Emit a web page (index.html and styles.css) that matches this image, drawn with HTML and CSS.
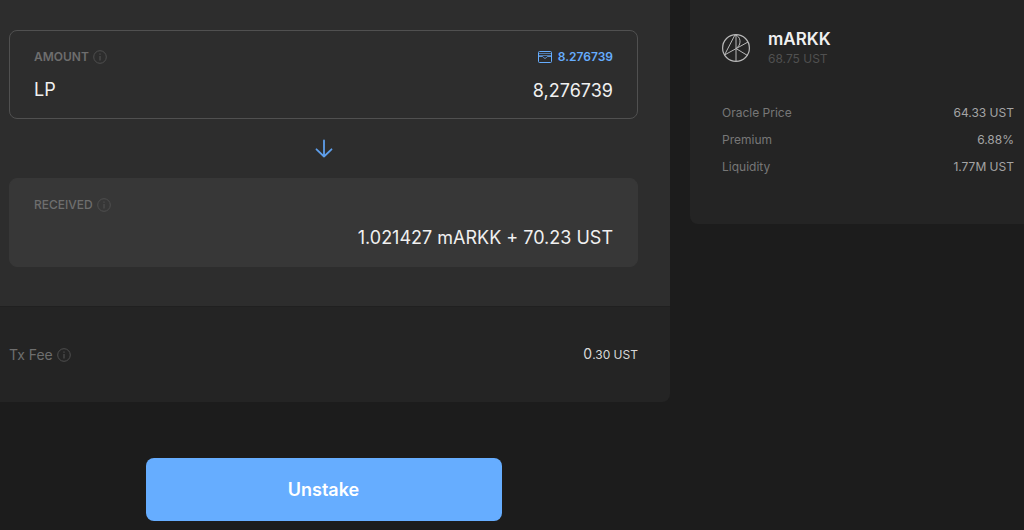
FILE: index.html
```html
<!DOCTYPE html>
<html lang="en">
<head>
    <meta charset="UTF-8">
    <meta name="viewport" content="width=device-width, initial-scale=1.0">
    <title>Unstake LP</title>
    <link rel="stylesheet" href="styles.css">
</head>
<body>
    <svg class="defs" aria-hidden="true">
        <symbol id="icon-info" viewBox="0 0 14 14">
            <circle cx="7" cy="7" r="6.3" fill="none" stroke="currentColor"/>
            <path d="M7 6v4.4M7 3.6v1.2" fill="none" stroke="currentColor" stroke-width="1.2"/>
        </symbol>
    </svg>

    <main class="layout">
        <form class="exchange">
            <section class="panel">
                <div class="field">
                    <div class="field-header">
                        <label for="amount">AMOUNT <svg class="icon-info"><use href="#icon-info"/></svg></label>
                        <button type="button" class="max">
                            <svg class="icon-wallet" viewBox="0 0 14 12" fill="none" stroke="currentColor">
                                <rect x="0.5" y="0.5" width="13" height="11" rx="1"/>
                                <path d="M0.5 2.500h13" stroke-opacity="0.6"/>
                                <path d="M0.5 4.500h13" stroke-opacity="0.6"/>
                                <path d="M0.5 5.500H4.500C5.300 5.500 5.300 7.300 7 7.300S8.700 5.500 9.500 5.500H13.500" stroke-opacity="0.8"/>
                            </svg>
                            8.276739
                        </button>
                    </div>
                    <div class="field-body">
                        <span>LP</span>
                        <input type="text" id="amount" name="amount" value="8,276739" inputmode="decimal" autocomplete="off">
                    </div>
                </div>

                <svg class="icon-arrow" viewBox="0 0 18 18" fill="none" stroke="currentColor" stroke-width="1.8" stroke-linecap="round" stroke-linejoin="round">
                    <path d="M9 1v16M1.500 9.800L9 17l7.500-7.200"/>
                </svg>

                <div class="field field-output">
                    <div class="field-header">
                        <label for="received">RECEIVED <svg class="icon-info"><use href="#icon-info"/></svg></label>
                    </div>
                    <div class="field-body">
                        <output id="received">1.021427 mARKK + 70.23 UST</output>
                    </div>
                </div>
            </section>

            <dl class="fee">
                <dt>Tx Fee <svg class="icon-info"><use href="#icon-info"/></svg></dt>
                <dd>0<small>.30 UST</small></dd>
            </dl>

            <div class="actions">
                <button type="submit" class="submit">Unstake</button>
            </div>
        </form>

        <aside class="asset">
            <header class="asset-header">
                <svg class="asset-logo" viewBox="0 0 28 28" fill="none" stroke="currentColor">
                    <circle cx="14" cy="14" r="13.400" stroke-width="1.200"/>
                    <path d="M2.500 21L13 0.800M14 1v26M2.500 21L26 8M14 14.500L25.500 21.500M13 0.800C19 2 20 11 14 14.500"/>
                </svg>
                <div>
                    <h1>mARKK</h1>
                    <p>68.75 UST</p>
                </div>
            </header>
            <dl class="stats">
                <div><dt>Oracle Price</dt><dd>64.33 UST</dd></div>
                <div><dt>Premium</dt><dd>6.88%</dd></div>
                <div><dt>Liquidity</dt><dd>1.77M UST</dd></div>
            </dl>
        </aside>
    </main>
</body>
</html>
```

FILE: styles.css
```css
:root {
    --bg: #1c1c1c;
    --card: #242424;
    --panel: #2d2d2d;
    --output: #373737;
    --border: #505050;
    --blue: #66adff;
    --text: #f0f0f0;
    --muted: #6e6e6e;
}

* {
    box-sizing: border-box;
}

body {
    font-family: Inter, "Liberation Sans", sans-serif;
    font-size: 12px;
    line-height: 20px;
    margin: 0;
    background: var(--bg);
    color: var(--text);
}

h1, p, dl, dd {
    margin: 0;
}

button, input {
    font-family: inherit;
    padding: 0;
    border: none;
    background: none;
}

button {
    cursor: pointer;
}

.defs {
    display: none;
}

.layout {
    display: grid;
    grid-template-columns: 1fr 334px;
    gap: 20px;
    align-items: start;
}

.panel {
    display: flex;
    flex-direction: column;
    padding: 30px 32px 39px 9px;
    background: var(--panel);
}

.field {
    padding: 16px 24px 14px;
    border: 1px solid var(--border);
    border-radius: 8px;
}

.field-output {
    background: var(--output);
    border-color: var(--output);
}

.field-header, .field-body {
    display: flex;
    justify-content: space-between;
    align-items: center;
}

.field-header {
    margin-bottom: 9px;
    color: var(--muted);
}

.field-header label {
    display: flex;
    align-items: center;
    gap: 4px;
    font-weight: 600;
}

.field-output label {
    font-weight: 500;
}

.field-body {
    font-size: 18px;
    line-height: 28px;
}

.field-body input {
    flex: 1;
    min-width: 0;
    height: 28px;
    color: inherit;
    font-size: 18px;
    text-align: right;
    outline: none;
}

.field-body output {
    margin-left: auto;
}

.icon-info {
    width: 14px;
    height: 14px;
    color: #4f4f4f;
}

.max {
    display: flex;
    align-items: center;
    gap: 6px;
    color: var(--blue);
    font-size: 12px;
    font-weight: 600;
    line-height: 20px;
}

.icon-wallet {
    width: 14px;
    height: 12px;
}

.icon-arrow {
    align-self: center;
    width: 18px;
    height: 19px;
    margin: 20px 0;
    color: #5e9eea;
}

.fee {
    display: flex;
    justify-content: space-between;
    align-items: center;
    padding: 37px 32px 37px 9px;
    border-top: 1px solid #202020;
    border-radius: 0 0 8px 0;
    background: var(--card);
    font-size: 14px;
}

.fee dt {
    display: flex;
    align-items: center;
    gap: 4px;
    color: var(--muted);
}

.fee dd {
    color: #d8d8d8;
}

.fee small {
    font-size: 12px;
}

.actions {
    padding: 56px 32px 9px 9px;
    text-align: center;
}

.submit {
    width: 100%;
    max-width: 356px;
    height: 63px;
    border-radius: 8px;
    background: var(--blue);
    color: #fff;
    font-size: 18px;
    font-weight: 600;
}

.asset {
    padding: 28px 10px 44px 32px;
    border-radius: 0 0 0 8px;
    background: var(--card);
}

.asset-header {
    display: flex;
    align-items: center;
    gap: 18px;
    margin-bottom: 31px;
}

.asset-header h1 {
    font-size: 17px;
    font-weight: 600;
    line-height: 22px;
}

.asset-header p {
    color: #505050;
    line-height: 18px;
}

.asset-logo {
    width: 28px;
    height: 28px;
    color: #b8b8b8;
}

.stats div {
    display: flex;
    justify-content: space-between;
    line-height: 27px;
}

.stats dt {
    color: #777;
}

.stats dd {
    color: #a4a4a4;
}
```
